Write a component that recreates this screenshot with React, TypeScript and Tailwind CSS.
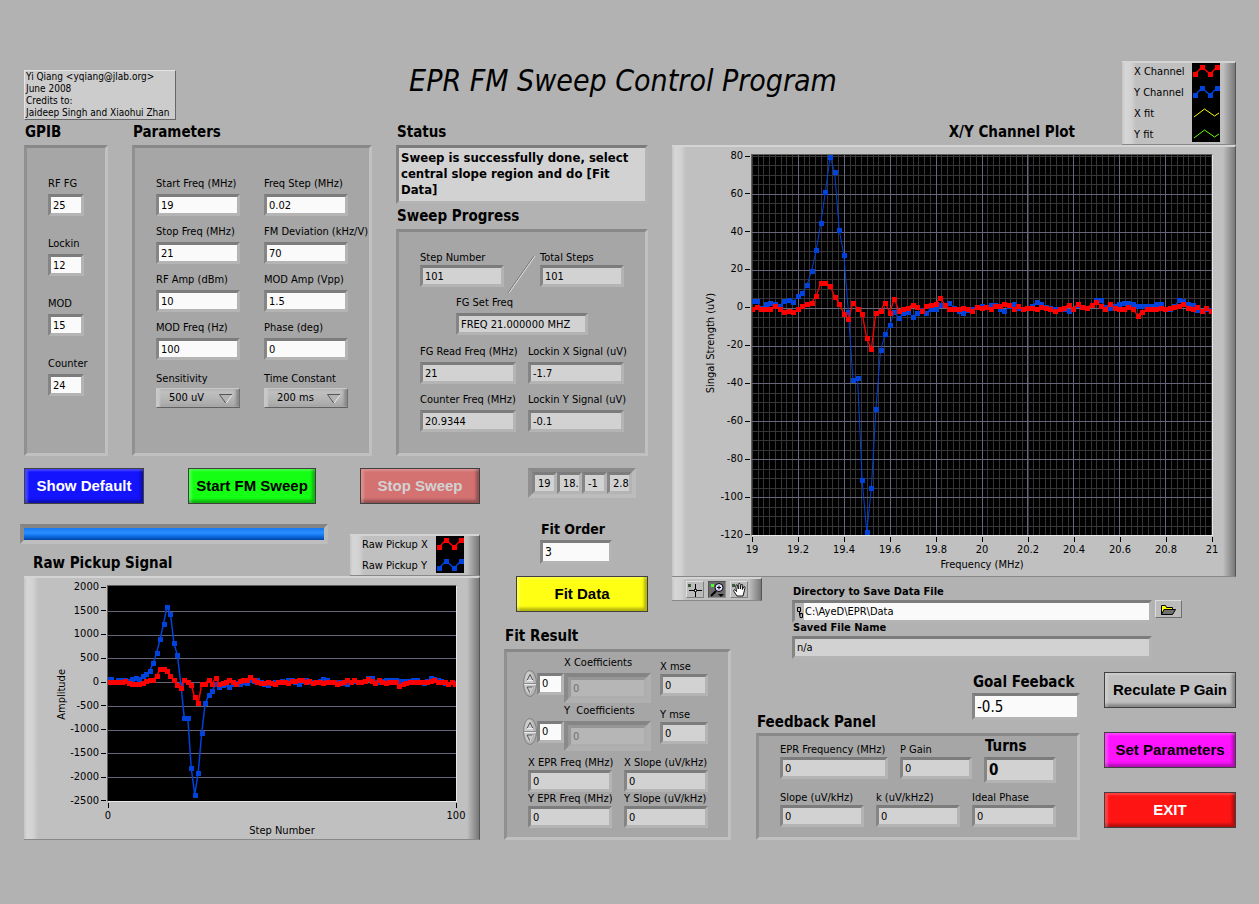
import { useId } from "react";
import clsx from "clsx";

const xData = [
    -0.5, 0.3, -0.5, -0.5, -0.5, 0.7, -1, -2.1, -1.6, -2.1, -1, 1, 2.1, 2.6, 6.3, 13.2, 13.2, 11.6, 5.8, 2.1,
    -3.2, -6.2, 2.6, -0.5, -3.2, -16.3, -22, -2.6, -1.6, 2.6, -2.6, 4.7, -1.6, -1, 0, 1.6, 0.5, -1.6, 1, 1.6,
    2.1, 5.3, 1.6, -0.5, -1, -1, 0, -1, -1.6, 0.5, 0, 0.5, -1, 1, 1, 2, 1.6, -0.5, 1, -1,
    0, 0, -1, 0.5, -0.4, -0.5, -2, -1, 0, 1.6, -0.5, 2, 0.5, 0, 1.5, 3, 1, -1, 2, 0,
    -1, -0.5, 0.5, -0.5, -4.2, -2.1, -1, -0.5, -0.5, 0, -0.5, 0, 0.5, 1, 2, 0, -0.5, 0.5, -1.8, 0, -1.8,
];

const yData = [
    3.3, 3.3, 0, 1.8, 2.6, 2, 1, 3.3, 4.2, 3.2, 6.2, 7.9, 12, 19.5, 30.6, 44.8, 61.2, 79.3, 71.7, 41,
    28, -2.3, -38.4, -37.4, -91, -118.6, -95.3, -53.7, -22.6, -14.1, -9.4, -2.5, -5.3, -3, -2.5, -4.8, -2.6, -1.5, -2.6, -0.5,
    -1, 1.6, 1.5, 2.6, 0, -2, -2.8, -1.2, -0.5, 0.3, 0.8, 0.3, 1.6, 1.6, -0.5, -2, 0.8, 2, 0, -0.5,
    0, 0.8, 3.1, 1.8, 0.3, 0, -0.5, -0.5, -1, -2, -0.5, 1.4, 0.5, 0, 1.2, 3.8, 4.2, 0.3, -0.4, 0.7,
    2, 2.6, 2.6, 2, 1, 1, 1, 1, 2, 2, -0.5, -0.7, 0.7, 3.8, 3.3, 2, 1.5, -1.4, -2, -0.5, -1.4,
];

const RED = "#ff0000";
const BLUE = "#0042dc";

const sunken = "border-[3px] border-t-[#7c7c7c] border-l-[#858585] border-r-[#b4b4b4] border-b-[#b4b4b4]";
const panel = "border-[3px] border-t-[#888888] border-l-[#909090] border-r-[#c0c0c0] border-b-[#c0c0c0] bg-[#a6a6a6]";
const raised = "border-t-2 border-b border-r border-t-[#d4d4d4] border-b-[#888888] border-r-[#555555] bg-[linear-gradient(to_right,#c4c4c4_0,#d6d6d6_3px,#d2d2d2_9px,#c0c0c0_14px,#c0c0c0_calc(100%_-_12px),#787878_100%)]";
const heading = "pl-px text-[15px] leading-[25px] font-bold whitespace-nowrap";

type FieldProps = {
    label: string;
    value: string;
    width: string;
    edit?: boolean;
    tight?: boolean;
};

const Field = ({ label, value, width, edit, tight }: FieldProps) => {
    const id = useId();
    return (
        <div className={clsx("flex flex-col", width)}>
            <label htmlFor={id} className={clsx("leading-[14px] whitespace-nowrap", !tight && "mb-[3px]")}>{label}</label>
            <input
                id={id}
                defaultValue={value}
                readOnly={!edit}
                className={clsx("h-[22px] w-full px-[2px] outline-none", sunken, edit ? "bg-[#fafafa]" : "bg-[#d2d2d2]")}
            />
        </div>
    );
};

const Dropdown = ({ label, value }: { label: string; value: string }) => {
    const id = useId();
    return (
        <div className="flex w-[84px] flex-col">
            <label htmlFor={id} className="mb-[2px] leading-[14px] whitespace-nowrap">{label}</label>
            <div className="relative">
                <select
                    id={id}
                    defaultValue={value}
                    className="h-5 w-full appearance-none border border-t-[#c8c8c8] border-l-[#c8c8c8] border-r-[#707070] border-b-[#606060] bg-[linear-gradient(to_bottom,#c4c4c4,#a8a8a8)] pl-3 shadow-[inset_3px_0_2px_#c8c8c8,inset_-3px_0_3px_#888888] outline-none"
                >
                    <option>{value}</option>
                </select>
                <svg className="pointer-events-none absolute top-[6px] right-[7px]" width="14" height="10" viewBox="0 0 14 10">
                    <path d="M0.5 0.5H13.5L7 9.5Z" fill="#b4b4b4" />
                    <path d="M13.5 0.5H0.5L7 9.5" fill="none" stroke="#555" />
                    <path d="M7 9.5L13.5 0.5" stroke="#e8e8e8" />
                </svg>
            </div>
        </div>
    );
};

const Button = ({ children, className }: { children: string; className: string }) => (
    <button
        type="button"
        className={clsx(
            "h-9 border border-[#404040] font-['Liberation_Sans',sans-serif] text-[15px] font-bold whitespace-nowrap shadow-[inset_3px_2px_2px_rgba(255,255,255,0.2),inset_-3px_-3px_3px_rgba(0,0,0,0.3)]",
            className
        )}
    >
        {children}
    </button>
);

const marks = [[3, 11], [10, 4], [18, 11], [25, 4]];

const Legend = ({ items }: { items: { name: string; color: string; dots: boolean }[] }) => (
    <div className={clsx("flex justify-between pr-[15px] pl-3", raised)}>
        <ul className="-mt-[2px] -mb-px">
            {items.map((item) => (
                <li key={item.name} className="leading-[21px] whitespace-nowrap">{item.name}</li>
            ))}
        </ul>
        <svg width="28" height={items.length * 21 - 5} className="bg-black">
            {items.map((item, i) => (
                <g key={item.name} transform={`translate(0 ${i * 21})`}>
                    {item.dots ? (
                        <>
                            <polyline points={marks.map((m) => m.join(",")).join(" ")} fill="none" stroke={item.color} strokeWidth="1.3" />
                            {marks.map(([x, y]) => (
                                <rect key={x} x={x - 2} y={y - 2} width="5" height="5" fill={item.color} shapeRendering="crispEdges" />
                            ))}
                        </>
                    ) : (
                        <polyline points="2,12 12.5,4 22.5,11 27,8" fill="none" stroke={item.color} />
                    )}
                </g>
            ))}
        </svg>
    </div>
);

type SeriesProps = {
    data: number[];
    color: string;
    px: (i: number) => number;
    py: (v: number) => number;
    stroke: number;
};

const Series = ({ data, color, px, py, stroke }: SeriesProps) => (
    <g>
        <polyline points={data.map((v, i) => `${px(i)},${py(v)}`).join(" ")} fill="none" stroke={color} strokeWidth={stroke} />
        {data.map((v, i) => (
            <rect key={i} x={Math.round(px(i)) - 2} y={Math.round(py(v)) - 2} width="5" height="5" fill={color} shapeRendering="crispEdges" />
        ))}
    </g>
);

const YTicks = ({ ticks, className }: { ticks: number[]; className: string }) => (
    <div className={clsx("flex shrink-0 flex-col justify-between", className)}>
        {ticks.map((t) => (
            <div key={t} className="flex h-0 items-center justify-end gap-[2px] pr-px">
                <span>{t}</span>
                <span className="h-px w-[5px] bg-black" />
            </div>
        ))}
    </div>
);

const XTicks = ({ ticks }: { ticks: number[] }) => (
    <div className="flex justify-between px-px pt-px">
        {ticks.map((t) => (
            <div key={t} className="flex w-0 flex-col items-center">
                <span className="h-[5px] w-px bg-black" />
                <span className="leading-[15px]">{t}</span>
            </div>
        ))}
    </div>
);

const plotBox = "block w-full border border-t-[#606060] border-l-[#606060] border-r-[#e8e8e8] border-b-[#e8e8e8] bg-black";

const ChannelPlot = () => {
    const px = (i: number) => i * 4.59;
    const py = (v: number) => 1 + (80 - v) * 1.895;
    return (
        <div className={clsx("flex pr-[22px] pb-1 pl-8", raised)}>
            <div className="w-[14px] rotate-180 self-center pt-8 leading-[14px] whitespace-nowrap [writing-mode:vertical-rl]">
                Singal Strength (uV)
            </div>
            <YTicks ticks={[80, 60, 40, 20, 0, -20, -40, -60, -80, -100, -120]} className="mt-[9px] h-[379px] w-[33px]" />
            <div className="min-w-0 flex-1 pt-[7px]">
                <svg className={clsx("h-[382px]", plotBox)} viewBox="0 0 460 380" preserveAspectRatio="none">
                    <g shapeRendering="crispEdges">
                        {Array.from({ length: 81 }, (_, i) => (
                            <line key={i} x1={Math.round(i * 5.74) + 0.5} x2={Math.round(i * 5.74) + 0.5} y1="0" y2="380" stroke="#363636" />
                        ))}
                        {Array.from({ length: 41 }, (_, i) => (
                            <line key={i} y1={Math.round(1 + i * 9.475) + 0.5} y2={Math.round(1 + i * 9.475) + 0.5} x1="0" x2="460" stroke="#363636" />
                        ))}
                        {Array.from({ length: 9 }, (_, i) => (
                            <line key={i} x1={Math.round((i + 1) * 45.9) + 0.5} x2={Math.round((i + 1) * 45.9) + 0.5} y1="0" y2="380" stroke="#66667a" />
                        ))}
                        {Array.from({ length: 9 }, (_, i) => (
                            <line key={i} y1={Math.round(1 + (i + 1) * 37.9) + 0.5} y2={Math.round(1 + (i + 1) * 37.9) + 0.5} x1="0" x2="460" stroke="#66667a" />
                        ))}
                    </g>
                    <Series data={yData} color={BLUE} px={px} py={py} stroke={1} />
                    <Series data={xData} color={RED} px={px} py={py} stroke={1.3} />
                </svg>
                <XTicks ticks={[19, 19.2, 19.4, 19.6, 19.8, 20, 20.2, 20.4, 20.6, 20.8, 21]} />
                <p className="text-center leading-[15px]">Frequency (MHz)</p>
            </div>
        </div>
    );
};

const RawPlot = () => {
    const px = (i: number) => i * 3.47;
    const py = (v: number) => 1 + (2000 - v * 20) * 0.0475;
    return (
        <div className={clsx("flex h-[264px] pr-[22px] pl-[31px]", raised)}>
            <div className="w-[14px] rotate-180 self-center pt-7 leading-[14px] whitespace-nowrap [writing-mode:vertical-rl]">Amplitude</div>
            <YTicks ticks={[2000, 1500, 1000, 500, 0, -500, -1000, -1500, -2000, -2500]} className="mt-[9px] h-[214px] w-[38px]" />
            <div className="min-w-0 flex-1 pt-[7px]">
                <svg className={clsx("h-[217px]", plotBox)} viewBox="0 0 348 215" preserveAspectRatio="none">
                    {Array.from({ length: 8 }, (_, i) => (
                        <line key={i} x1="0" x2="348" y1={Math.round(1 + (i + 1) * 23.75) + 0.5} y2={Math.round(1 + (i + 1) * 23.75) + 0.5} stroke="#66667a" />
                    ))}
                    <Series data={yData} color={BLUE} px={px} py={py} stroke={1.5} />
                    <Series data={xData} color={RED} px={px} py={py} stroke={1.5} />
                </svg>
                <XTicks ticks={[0, 100]} />
                <p className="text-center leading-[15px]">Step Number</p>
            </div>
        </div>
    );
};

const Coefficient = ({ label, mse }: { label: string; mse: string }) => {
    const id = useId();
    return (
        <div className="flex h-12 items-start">
            <div className="mt-[14px] flex items-center">
                <svg width="14" height="27" viewBox="0 0 14 27">
                    <ellipse cx="7" cy="13.5" rx="6.5" ry="13" fill="#b4b4b4" stroke="#808080" />
                    <ellipse cx="6" cy="12.5" rx="4.5" ry="11" fill="#cccccc" />
                    <path d="M1 13.5H13" stroke="#888" />
                    <path d="M1 14.5H13" stroke="#e8e8e8" />
                    <path d="M4 10.5L7 4.5L10 10.5" fill="none" stroke="#555" />
                    <path d="M4 10.5H10" stroke="#eee" />
                    <path d="M10 17L7 23L4 17Z" fill="none" stroke="#555" />
                    <path d="M10 17L7 23" stroke="#eee" />
                </svg>
                <input aria-label={`${label} index`} defaultValue="0" className={clsx("h-[22px] w-[27px] bg-[#fafafa] px-[2px] outline-none", sunken)} />
            </div>
            <div className="flex w-[96px] flex-col">
                <label htmlFor={id} className="mb-[3px] leading-[14px] whitespace-pre">{label}</label>
                <div className="w-[87px] border-4 border-t-[#858585] border-l-[#8a8a8a] border-r-[#b0b0b0] border-b-[#b0b0b0]">
                    <input id={id} disabled defaultValue="0" className="block h-[22px] w-full border-[3px] border-t-[#969696] border-l-[#999999] border-r-[#aeaeae] border-b-[#aeaeae] bg-[#b6b6b6] px-[2px] text-[#707070]" />
                </div>
            </div>
            <div className="pt-1">
                <Field label={mse} value="0" width="w-12" tight />
            </div>
        </div>
    );
};

const App = () => {
    return (
        <main className="grid min-h-screen grid-cols-[480px_168px_84px_minmax(0,1fr)_114px] grid-rows-[60px_25px_auto_73px_47px_auto] content-start bg-[#b2b2b2] pt-[60px] pr-[23px] pb-16 pl-6 font-['DejaVu_Sans_Condensed','DejaVu_Sans',sans-serif] text-[11px] text-black">
            <header className="col-span-4 col-start-1 row-start-1 flex items-start">
                <p className="mt-[10px] w-[152px] shrink-0 border border-t-[#e4e4e4] border-l-[#e4e4e4] border-r-[#666666] border-b-[#666666] bg-[#cccccc] pl-px text-[10px] leading-3 whitespace-nowrap">
                    Yi Qiang &lt;yqiang@jlab.org&gt;
                    <br />
                    June 2008
                    <br />
                    Credits to:
                    <br />
                    Jaideep Singh and Xiaohui Zhan
                </p>
                <h1 className="flex-1 pr-[52px] text-center text-[30px] leading-[42px] whitespace-nowrap italic">EPR FM Sweep Control Program</h1>
            </header>

            <div className="col-start-5 row-span-2 row-start-1 flex flex-col justify-end">
                <Legend
                    items={[
                        { name: "X Channel", color: RED, dots: true },
                        { name: "Y Channel", color: BLUE, dots: true },
                        { name: "X fit", color: "#ffff00", dots: false },
                        { name: "Y fit", color: "#66ff00", dots: false },
                    ]}
                />
            </div>
            <h2 className={clsx("col-span-2 col-start-3 row-start-2 pr-[47px] text-right", heading)}>X/Y Channel Plot</h2>

            <div className="col-span-2 col-start-1 row-span-2 row-start-2">
                <div className="flex gap-6">
                    <section className="flex w-[84px] flex-col">
                        <h2 className={heading}>GPIB</h2>
                        <div className={clsx("flex flex-1 flex-col gap-[21px] pt-[29px] pl-[21px]", panel)}>
                            <Field label="RF FG" value="25" width="w-9" edit />
                            <Field label="Lockin" value="12" width="w-9" edit />
                            <Field label="MOD" value="15" width="w-9" edit />
                            <Field label="Counter" value="24" width="w-9" edit />
                        </div>
                    </section>
                    <section className="flex w-[240px] flex-col">
                        <h2 className={heading}>Parameters</h2>
                        <div className={clsx("grid flex-1 grid-cols-[84px_84px] content-start gap-x-6 gap-y-[9px] pt-[29px] pl-[21px]", panel)}>
                            <Field label="Start Freq (MHz)" value="19" width="w-[84px]" edit />
                            <Field label="Freq Step (MHz)" value="0.02" width="w-[84px]" edit />
                            <Field label="Stop Freq (MHz)" value="21" width="w-[84px]" edit />
                            <Field label="FM Deviation (kHz/V)" value="70" width="w-[84px]" edit />
                            <Field label="RF Amp (dBm)" value="10" width="w-[84px]" edit />
                            <Field label="MOD Amp (Vpp)" value="1.5" width="w-[84px]" edit />
                            <Field label="MOD Freq (Hz)" value="100" width="w-[84px]" edit />
                            <Field label="Phase (deg)" value="0" width="w-[84px]" edit />
                            <div className="pt-[3px]">
                                <Dropdown label="Sensitivity" value="500 uV" />
                            </div>
                            <div className="pt-[3px]">
                                <Dropdown label="Time Constant" value="200 ms" />
                            </div>
                        </div>
                    </section>
                    <section className="flex w-[252px] flex-col">
                        <h2 className={heading}>Status</h2>
                        <p className={clsx("h-[59px] bg-[#d2d2d2] pt-[2px] pl-[2px] text-[13px] leading-4 font-bold", sunken)}>
                            Sweep is successfully done, select central slope region and do [Fit Data]
                        </p>
                        <h2 className={heading}>Sweep Progress</h2>
                        <div className={clsx("h-[227px] pt-[19px] pl-[21px]", panel)}>
                            <div className="flex">
                                <Field label="Step Number" value="101" width="w-[84px]" tight />
                                <svg width="36" height="42" viewBox="0 0 36 42">
                                    <path d="M4 42L30 5" stroke="#707070" />
                                    <path d="M5 42L31 5" stroke="#e0e0e0" />
                                </svg>
                                <Field label="Total Steps" value="101" width="w-[84px]" tight />
                            </div>
                            <div className="mt-[3px] flex w-[204px] justify-center">
                                <Field label="FG Set Freq" value="FREQ 21.000000 MHZ" width="w-[132px]" />
                            </div>
                            <div className="mt-[10px] grid grid-cols-[96px_96px] gap-x-3 gap-y-[9px]">
                                <Field label="FG Read Freq (MHz)" value="21" width="w-24" />
                                <Field label="Lockin X Signal (uV)" value="-1.7" width="w-24" />
                                <Field label="Counter Freq (MHz)" value="20.9344" width="w-24" />
                                <Field label="Lockin Y Signal (uV)" value="-0.1" width="w-24" />
                            </div>
                        </div>
                    </section>
                </div>
                <div className="mt-3 flex items-start">
                    <Button className="w-[120px] bg-[#1414ff] text-white">Show Default</Button>
                    <Button className="ml-11 w-32 bg-[#14ff14]">Start FM Sweep</Button>
                    <Button className="ml-11 w-[120px] border-[#8a7070] bg-[#d47272] text-[#d2d2d2]">Stop Sweep</Button>
                    <div className="ml-12 flex w-[108px] border-4 border-t-[#8a8a8a] border-l-[#909090] border-r-[#bcbcbc] border-b-[#bcbcbc]">
                        {["19", "18.", "-1", "2.8"].map((v, i) => (
                            <input
                                key={v}
                                readOnly
                                aria-label={`Cursor value ${i + 1}`}
                                defaultValue={v}
                                className={clsx("h-[22px] min-w-0 flex-1 bg-[#d2d2d2] pl-[3px] outline-none", sunken)}
                            />
                        ))}
                    </div>
                </div>
            </div>

            <div className="col-span-3 col-start-3 row-span-2 row-start-3 flex flex-col">
                <ChannelPlot />
            </div>

            <section className="col-start-1 row-span-3 row-start-4 w-[456px] pt-5">
                <div role="progressbar" aria-label="Sweep" aria-valuenow={100} className="-ml-1 h-5 w-[308px] border-4 border-t-[#848484] border-l-[#8a8a8a] border-r-[#bababa] border-b-[#bebebe] bg-[linear-gradient(to_bottom,#1478f0,#2a90ff_40%,#1478f0_60%,#0044a8)]" />
                <div className="-mt-[10px] flex items-end justify-between pl-2">
                    <h2 className={heading}>Raw Pickup Signal</h2>
                    <div className="flex w-[130px] flex-col">
                        <Legend
                            items={[
                                { name: "Raw Pickup X", color: RED, dots: true },
                                { name: "Raw Pickup Y", color: BLUE, dots: true },
                            ]}
                        />
                    </div>
                </div>
                <RawPlot />
            </section>

            <section className="col-start-2 row-span-2 row-start-4 pt-[14px] pl-3">
                <div className="flex flex-col pl-6">
                    <label htmlFor="fit-order" className="pl-px text-[14px] leading-[22px] font-bold">Fit Order</label>
                    <input id="fit-order" defaultValue="3" className={clsx("h-6 w-[72px] bg-[#fafafa] px-[2px] text-[12px] outline-none", sunken)} />
                </div>
                <Button className="mt-3 w-[132px] bg-[#ffff14]">Fit Data</Button>
            </section>

            <div className={clsx("col-start-3 row-start-5 flex h-6 w-[90px] items-center gap-1 pl-[14px]", raised)}>
                <button type="button" aria-label="Cursor" className="h-[17px] w-[18px] border border-t-[#dddddd] border-l-[#dddddd] border-r-[#808080] border-b-[#808080] bg-[#bcbcbc]">
                    <svg width="16" height="15" viewBox="0 0 16 15">
                        <rect x="1" y="2" width="3" height="3" fill="#3c5a3c" />
                        <path d="M8.5 2V7M8.5 10V15M2 8.5H7M10 8.5H15" stroke="#000" />
                        <rect x="7.5" y="7.5" width="2" height="2" fill="#fff" stroke="#000" strokeWidth="0.8" />
                    </svg>
                </button>
                <button type="button" aria-label="Zoom" className="h-[17px] w-[18px] border border-t-[#505050] border-l-[#505050] border-r-[#909090] border-b-[#909090] bg-[#6c6c6c]">
                    <svg width="16" height="15" viewBox="0 0 16 15">
                        <rect x="2" y="2" width="3" height="3" fill="#46ff28" />
                        <path d="M7 9L2 14" stroke="#000" strokeWidth="2" />
                        <circle cx="10" cy="5.5" r="4" fill="#e0e0ff" stroke="#000" />
                        <path d="M10 3.5V7.5M8 5.5H12" stroke="#000" />
                        <path d="M9 12H15L12 15Z" fill="#000" />
                    </svg>
                </button>
                <button type="button" aria-label="Pan" className="h-[17px] w-[18px] border border-t-[#dddddd] border-l-[#dddddd] border-r-[#808080] border-b-[#808080] bg-[#bcbcbc]">
                    <svg width="16" height="15" viewBox="0 0 16 15">
                        <rect x="1" y="2" width="3" height="3" fill="#3c5a3c" />
                        <path d="M6 14L3 9.5C2 8 3.5 7 4.5 8.5L5.5 9.5L4.8 4C4.8 2.5 6.3 2.5 6.6 4L7.3 7L7.3 2.5C7.5 1 9 1 9.2 2.5L9.4 7L10 3C10.4 1.8 11.8 2 11.7 3.5L11.4 7.5L12.5 5C13.2 4 14.4 4.5 14 6L12 14Z" fill="#fff" stroke="#000" strokeWidth="0.9" />
                    </svg>
                </button>
            </div>

            <section className="col-span-2 col-start-2 row-start-6 w-[227px]">
                <h2 className={heading}>Fit Result</h2>
                <div className={clsx("h-[191px] pt-[4px] pl-[16px]", panel)}>
                    <Coefficient label="X Coefficients" mse="X mse" />
                    <Coefficient label="Y  Coefficients" mse="Y mse" />
                    <div className="grid grid-cols-[84px_84px] gap-x-3 pt-1 pl-[5px]">
                        <Field label="X EPR Freq (MHz)" value="0" width="w-[84px]" tight />
                        <Field label="X Slope (uV/kHz)" value="0" width="w-[84px]" tight />
                        <Field label="Y EPR Freq (MHz)" value="0" width="w-[84px]" tight />
                        <Field label="Y Slope (uV/kHz)" value="0" width="w-[84px]" tight />
                    </div>
                </div>
            </section>

            <section className="col-span-2 col-start-4 row-span-2 row-start-5">
                <div className="grid grid-cols-[minmax(0,1fr)_81px] gap-x-[3px] pt-[7px] pl-9">
                    <label htmlFor="save-dir" className="col-span-2 pl-px leading-4 font-bold">Directory to Save Data File</label>
                    <div className={clsx("flex h-[23px] bg-[#fafafa]", sunken)}>
                        <svg className="h-full w-[9px] shrink-0 bg-[#b8b8b8]" viewBox="0 0 9 17">
                            <path d="M2.5 4.5H5.5V8.5H2.5ZM4.5 8.5V12.5M5 10.5H7.5V14.5H5Z" fill="none" stroke="#000" />
                        </svg>
                        <input id="save-dir" defaultValue="C:\AyeD\EPR\Data" className="min-w-0 flex-1 bg-transparent pt-px pl-px outline-none" />
                    </div>
                    <button type="button" aria-label="Browse" className="flex h-[18px] w-[27px] items-center justify-center border border-t-[#dddddd] border-l-[#dddddd] border-r-[#707070] border-b-[#707070] bg-[#bcbcbc]">
                        <svg width="15" height="11" viewBox="0 0 15 11">
                            <path d="M0.5 10.5V1.5H4.5L5.5 3.5H11.5V5.5" fill="#ffff00" stroke="#000" />
                            <path d="M0.5 10.5L3 5.5H14.5L11.5 10.5Z" fill="#707070" stroke="#000" />
                        </svg>
                    </button>
                    <label htmlFor="saved-file" className="col-span-2 -mt-[3px] pl-px leading-4 font-bold">Saved File Name</label>
                    <input id="saved-file" readOnly defaultValue="n/a" className={clsx("h-[23px] bg-[#d2d2d2] px-[2px] outline-none", sunken)} />
                </div>
                <div className="mt-[13px] flex items-start justify-between gap-6">
                    <div className="w-[324px]">
                        <div className="flex justify-between">
                            <h2 className="pt-[39px] pl-px text-[15px] leading-[22px] font-bold whitespace-nowrap">Feedback Panel</h2>
                            <div className="flex w-[108px] flex-col">
                                <label htmlFor="goal" className="pl-px text-[15px] leading-[21px] font-bold whitespace-nowrap">Goal Feeback</label>
                                <input id="goal" defaultValue="-0.5" className={clsx("h-[27px] w-full bg-[#fafafa] px-[2px] text-[15px] outline-none", sunken)} />
                            </div>
                        </div>
                        <div className={clsx("h-[107px] pl-[21px]", panel)}>
                            <div className="flex gap-3">
                                <div className="pt-[7px]">
                                    <Field label="EPR Frequency (MHz)" value="0" width="w-[108px]" tight />
                                </div>
                                <div className="pt-[7px]">
                                    <Field label="P Gain" value="0" width="w-[72px]" tight />
                                </div>
                                <div className="flex w-[72px] flex-col">
                                    <label htmlFor="turns" className="pl-px text-[15px] leading-[21px] font-bold">Turns</label>
                                    <input id="turns" readOnly defaultValue="0" className={clsx("h-[26px] w-full bg-[#d2d2d2] px-[2px] text-[15px] font-bold outline-none", sunken)} />
                                </div>
                            </div>
                            <div className="mt-2 flex gap-3">
                                <Field label="Slope (uV/kHz)" value="0" width="w-[84px]" tight />
                                <Field label="k (uV/kHz2)" value="0" width="w-[84px]" tight />
                                <Field label="Ideal Phase" value="0" width="w-[84px]" tight />
                            </div>
                        </div>
                    </div>
                    <div className="flex w-[132px] flex-col gap-6">
                        <Button className="bg-[#c0c0c0]">Reculate P Gain</Button>
                        <Button className="bg-[#ff14ff]">Set Parameters</Button>
                        <Button className="bg-[#ff1414] text-white">EXIT</Button>
                    </div>
                </div>
            </section>
        </main>
    );
};

export default App;
